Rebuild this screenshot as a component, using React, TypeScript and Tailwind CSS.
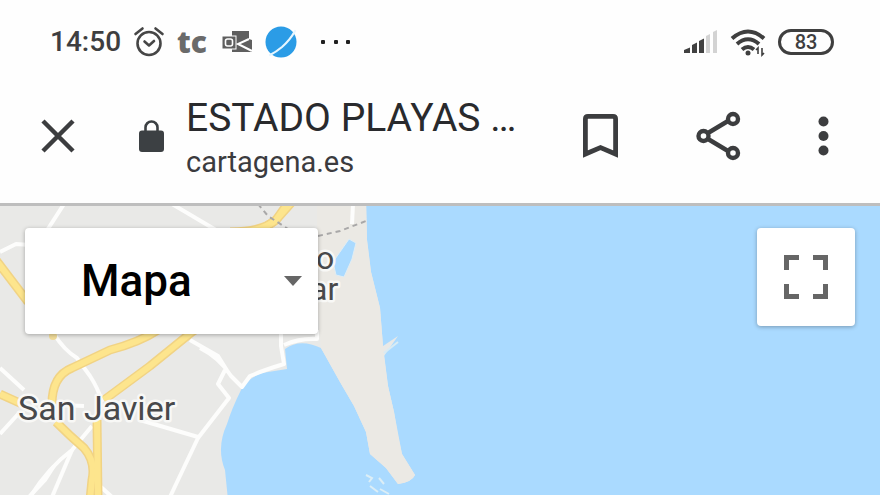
import React from "react";

const minorRoads = [
  "M64 204 L46 232 M0 252 L16 244 L30 245",
  "M172 204 L216 230",
  "M54 466 L45 480 L28 498 M0 368 L24 390",
  "M54 334 Q64 350 77 358 L90 376 Q98 388 102 402",
  "M20 412 L0 434 M92 426 L72 450 Q48 468 30 497",
  "M72 450 L52 497",
  "M60 405 L84 406 M140 420 L198 437",
  "M190 340 L218 356 L228 372 M200 348 Q220 358 231 376 L242 387 L250 376 Q264 370 284 364 L281 346 L281 330",
  "M225 370 L218 384 L229 398 L198 438 L178 480 L170 497",
  "M284 345 Q300 338 317 339 L317 330 M101 487 L112 497",
  "M353 204 L352 224",
];

const mainRoads = [
  "M-4 260 L28 302",
  "M52 404 Q52 376 72 368 L110 350 Q140 342 158 330 L170 320",
  "M104 400 L150 366 L192 332 L210 320",
  "M0 394 L22 404",
  "M56 422 Q70 436 84 448 Q96 462 92 480 L90 500",
  "M97 420 L98 500",
  "M230 232 Q262 232 276 220 L292 202",
  "M262 229 L276 220 L288 203",
];

function Terrain() {
  return (
    <svg
      className="absolute inset-0 h-full w-full"
      viewBox="0 206 880 289"
      preserveAspectRatio="xMinYMin slice"
      aria-hidden="true"
    >
      <rect x="0" y="200" width="880" height="300" fill="#aadaff" />
      <path
        d="M0 200 H366 L367 240 L371 272 L380 308 L383 346 L398 336 L384 356 L388 386 L394 412 L398 436 L402 454 L415 475 Q412 482 398 484 L386 468 L370 454 L366 432 L354 406 L340 382 L321 348 Q300 338 285 349 L287 369 L262 373 Q248 378 241 390 Q232 408 227 424 Q216 448 225 470 L228 500 H0 Z"
        fill="#e9e9e7"
      />
      <path
        d="M317 200 H366 L367 240 L371 272 L380 308 L383 346 L388 386 L394 412 L402 454 L415 475 Q412 482 398 484 L386 468 L370 454 L366 432 L354 406 L340 382 L321 348 L317 300 Z"
        fill="#ebe9e4"
      />
      <path d="M384 353 L398 342" stroke="#d8ebf4" strokeWidth="2" fill="none" />
      <path d="M349 239 L356 243 L352 259 L344 277 L336 275 L333 262 Z" fill="#aadaff" stroke="#e1edf3" strokeWidth="1" />
      <g fill="none" stroke="#fdfdfc" strokeWidth="4" strokeLinejoin="round">
        {minorRoads.map((d) => (
          <path key={d} d={d} />
        ))}
      </g>
      <g fill="none" stroke="#f1d384" strokeWidth="9" strokeLinejoin="round">
        {mainRoads.map((d) => (
          <path key={d} d={d} />
        ))}
      </g>
      <g fill="none" stroke="#fde58d" strokeWidth="6" strokeLinejoin="round">
        {mainRoads.map((d) => (
          <path key={d} d={d} />
        ))}
      </g>
      <circle cx="53" cy="336" r="4" fill="#f1dc9a" />
      <path
        d="M258 204 L268 216 L288 229 M318 236 L340 231 L366 221"
        fill="none"
        stroke="#a9a8a8"
        strokeWidth="2"
        strokeDasharray="5 4"
      />
      <path
        d="M366 475 L372 478 L369 482 M370 486 L378 492 M379 478 L384 484 M380 489 L389 494"
        fill="none"
        stroke="#dceef6"
        strokeWidth="2"
      />
      <g
        fontFamily="Roboto, sans-serif"
        fill="#48494b"
        stroke="#f8f8f6"
        strokeWidth="5"
        strokeLinejoin="round"
        paintOrder="stroke"
      >
        <text x="18" y="420" fontSize="34">San Javier</text>
        <text fontSize="32">
          <tspan x="316" y="269">o</tspan>
          <tspan x="310" y="300">ar</tspan>
        </text>
      </g>
    </svg>
  );
}

function StatusBar() {
  return (
    <div className="flex h-[84px] items-center pr-[46px] pl-[50px] text-[#3e3e40]">
      <span className="text-[28px] leading-8 font-medium">14:50</span>
      <svg className="ml-3 h-8 w-8" viewBox="0 0 32 32" fill="none" stroke="#464646" strokeWidth="2.6" strokeLinecap="round" strokeLinejoin="round" aria-hidden="true">
        <circle cx="16" cy="17.5" r="11.5" />
        <path d="M2.5 8 L9.5 2.5 M22.5 2.5 L29.5 8 M11.5 15.5 L16 19.5 L21 15" />
      </svg>
      <span className="ml-3 w-8 font-['Open_Sans'] text-[30px] leading-8 font-extrabold text-[#6a6a6a]">tc</span>
      <svg className="ml-3 h-6 w-8" viewBox="0 0 32 24" aria-hidden="true">
        <path d="M11 1 H28 V9 L31 10 V22 H11 Z" fill="#5f5f5f" />
        <path d="M28 9 L17 14 L31 21" fill="none" stroke="#fff" strokeWidth="2" />
        <rect x="1" y="6" width="14" height="13" fill="#5f5f5f" stroke="#fff" strokeWidth="1" />
        <rect x="4.5" y="9" width="7" height="7" rx="2" fill="none" stroke="#fff" strokeWidth="1.6" />
      </svg>
      <svg className="ml-3 h-8 w-8" viewBox="0 0 32 32" aria-hidden="true">
        <circle cx="16" cy="16" r="15.5" fill="#2b9ce6" />
        <path d="M30 5 Q25 14 17 21 Q11 26 5 29" fill="none" stroke="#e6f6ff" strokeWidth="2.2" strokeLinecap="round" />
      </svg>
      <svg className="ml-6 h-1 w-8" viewBox="0 0 32 4" fill="#202020" aria-hidden="true">
        <rect x="0" width="4" height="4" rx="1" />
        <rect x="13" width="4" height="4" rx="1" />
        <rect x="25" width="4" height="4" rx="1" />
      </svg>
      <div className="ml-auto flex items-center">
        <svg className="h-6 w-[34px]" viewBox="0 0 34 24" aria-hidden="true">
          <path d="M0 23 V20 L6 17.5 V23 Z M8 23 V15 L13 12.5 V23 Z M15 23 V11 L20 8.5 V23 Z" fill="#414141" />
          <path d="M22 23 V6 L26 4 V23 Z M29 23 V2 L33 0 V23 Z" fill="#d3d3d3" />
        </svg>
        <svg className="ml-3 h-8 w-9" viewBox="0 0 36 32" fill="none" stroke="#3f3f3f" strokeWidth="4" aria-hidden="true">
          <path d="M2 12.5 Q18 -1.5 34 12.5 M7 18 Q18 8.5 29 18 M12 23.5 Q18 18.5 24 23.5" />
          <circle cx="18" cy="27" r="2.5" fill="#3f3f3f" stroke="none" />
          <path d="M28 28 V22 L26 24 M32 22 V29 L34 27" strokeWidth="1.6" />
        </svg>
        <span className="ml-3 flex h-[26px] w-14 items-center justify-center rounded-full border-[3px] border-[#3f3f3f] text-xl leading-5 font-medium">
          83
        </span>
      </div>
    </div>
  );
}

function Toolbar() {
  return (
    <div className="flex h-[119px] items-center pr-[51px] pb-4 pl-[41px] text-[#3c3d3f]">
      <button type="button" aria-label="Cerrar" className="shrink-0">
        <svg className="h-[34px] w-[34px]" viewBox="0 0 34 34" fill="none" stroke="currentColor" strokeWidth="4.5" aria-hidden="true">
          <path d="M2 2 L32 32 M32 2 L2 32" />
        </svg>
      </button>
      <svg className="ml-16 h-8 w-[25px] shrink-0" viewBox="0 0 25 32" aria-hidden="true">
        <rect x="0" y="10.5" width="25" height="21.5" rx="3" fill="#3c4043" />
        <path d="M6.5 12 V7.5 A6 6 0 0 1 18.5 7.5 V12" fill="none" stroke="#3c4043" strokeWidth="2.6" />
      </svg>
      <div className="ml-[22px] min-w-0 pt-1 whitespace-nowrap">
        <h1 className="text-[39px] leading-[48px] text-[#292a2d]">ESTADO PLAYAS …</h1>
        <p className="text-[29px] leading-10 text-[#3b3b3e]">cartagena.es</p>
      </div>
      <div className="ml-auto flex shrink-0 items-center">
        <button type="button" aria-label="Guardar">
          <svg className="h-11 w-[35px]" viewBox="0 0 35 44" fill="none" stroke="currentColor" strokeWidth="4.8" aria-hidden="true">
            <path d="M2.4 40 V5 Q2.4 2.4 5 2.4 H30 Q32.6 2.4 32.6 5 V40 L17.5 33.5 Z" />
          </svg>
        </button>
        <button type="button" aria-label="Compartir" className="ml-[78px]">
          <svg className="h-[50px] w-[45px]" viewBox="0 0 45 50" fill="none" stroke="currentColor" strokeWidth="4.4" aria-hidden="true">
            <path d="M12 22 L32 10 M12 28 L32 40" />
            <circle cx="7.5" cy="25" r="5" />
            <circle cx="37" cy="8" r="5" />
            <circle cx="37" cy="42" r="5" />
          </svg>
        </button>
        <button type="button" aria-label="Más opciones" className="ml-[77px]">
          <svg className="h-10 w-[11px]" viewBox="0 0 11 40" fill="currentColor" aria-hidden="true">
            <circle cx="5.5" cy="5.5" r="5" />
            <circle cx="5.5" cy="20" r="5" />
            <circle cx="5.5" cy="34.5" r="5" />
          </svg>
        </button>
      </div>
    </div>
  );
}

export default function App() {
  return (
    <div className="flex min-h-screen flex-col bg-[#fefefe] font-[Roboto,sans-serif]">
      <header className="border-b-[3px] border-[#00000040] bg-[#fefefe]">
        <StatusBar />
        <Toolbar />
      </header>
      <main className="relative flex flex-1 items-start justify-between overflow-hidden px-[25px] pt-[22px]">
        <Terrain />
        <div className="relative">
          <select
            aria-label="Tipo de mapa"
            className="h-[106px] w-[293px] appearance-none rounded-[4px] bg-white pl-14 text-[44px] font-medium text-black shadow-[0_1px_4px_rgba(0,0,0,0.3)]"
          >
            <option>Mapa</option>
          </select>
          <svg className="pointer-events-none absolute top-12 right-4 h-[10px] w-[18px]" viewBox="0 0 18 10" fill="#666" aria-hidden="true">
            <path d="M0 0 H18 L9 10 Z" />
          </svg>
        </div>
        <button
          type="button"
          aria-label="Pantalla completa"
          className="relative flex h-[98px] w-[98px] items-center justify-center rounded-[4px] bg-white shadow-[0_1px_4px_rgba(0,0,0,0.3)]"
        >
          <svg className="h-11 w-11" viewBox="0 0 44 44" fill="none" stroke="#666" strokeWidth="5" aria-hidden="true">
            <path d="M2.5 15 V2.5 H15 M29 2.5 H41.5 V15 M41.5 29 V41.5 H29 M15 41.5 H2.5 V29" />
          </svg>
        </button>
      </main>
    </div>
  );
}
